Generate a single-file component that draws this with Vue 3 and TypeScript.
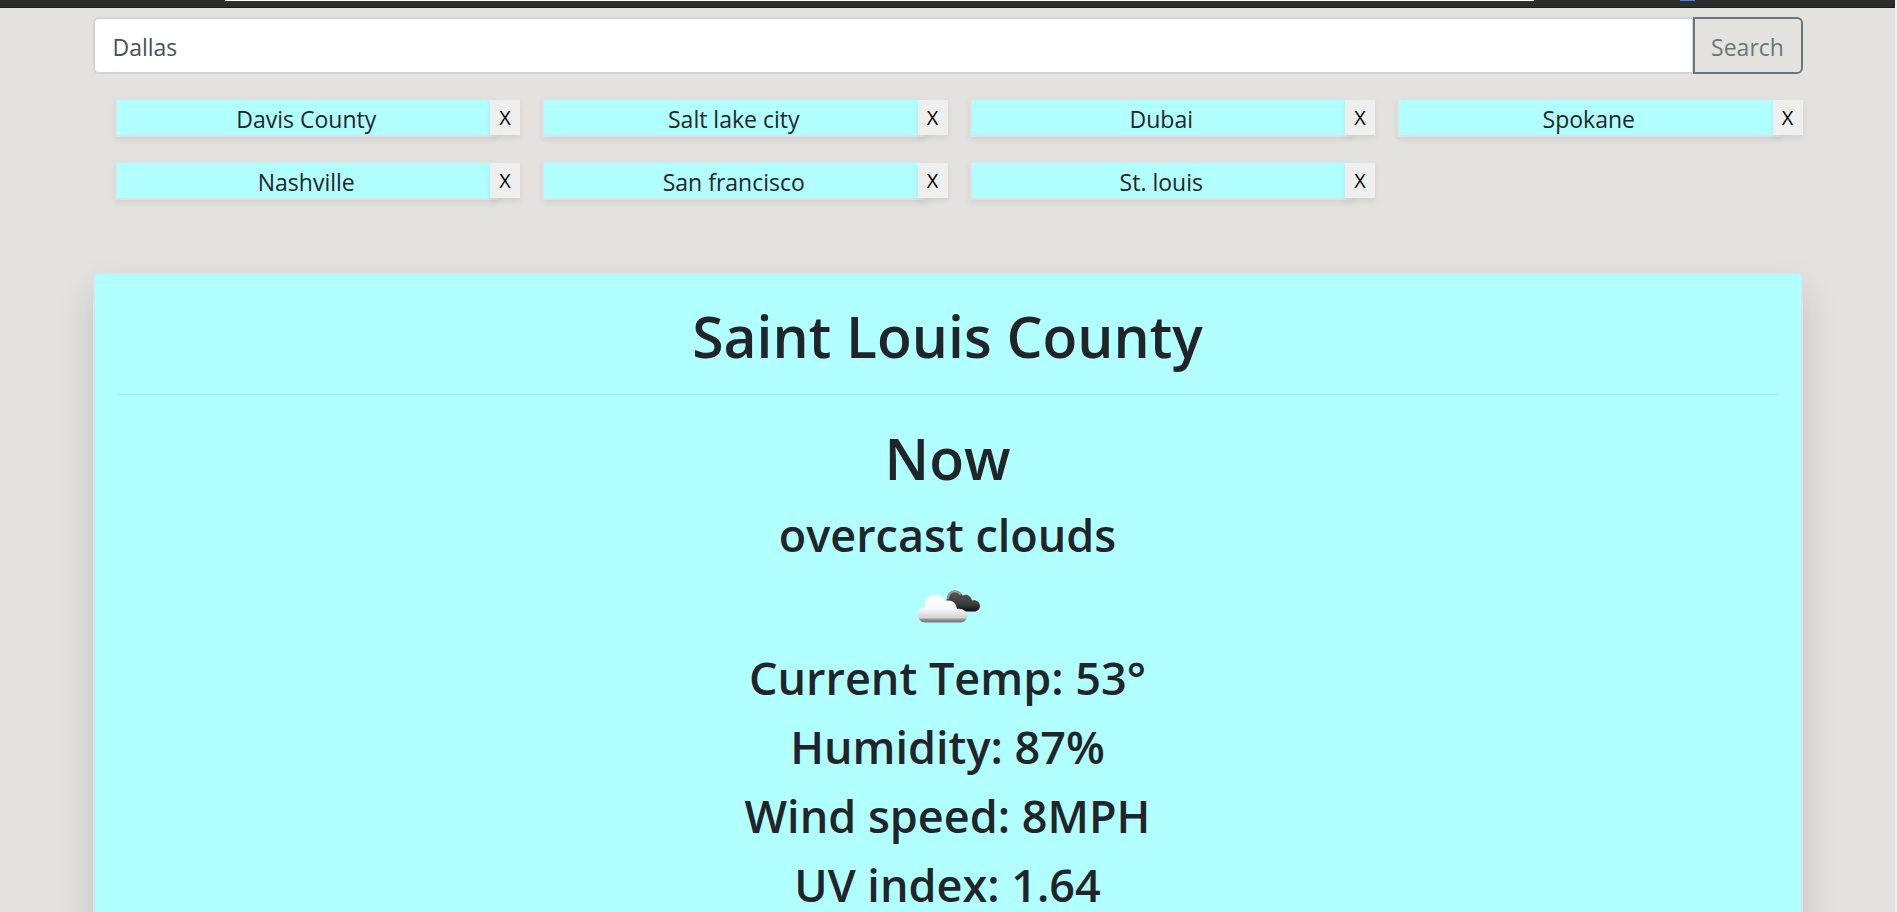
<script setup lang="ts">
import { ref } from 'vue'

const query = ref('Dallas')
const cities = ref<string[]>([
  'Davis County',
  'Salt lake city',
  'Dubai',
  'Spokane',
  'Nashville',
  'San francisco',
  'St. louis',
])
const current = ref('Saint Louis County')
const readings: string[] = [
  'Current Temp: 53°',
  'Humidity: 87%',
  'Wind speed: 8MPH',
  'UV index: 1.64',
]

function addCity(): void {
  const name = query.value.trim()
  if (name && !cities.value.includes(name)) cities.value.push(name)
}

function removeCity(index: number): void {
  cities.value.splice(index, 1)
}
</script>

<template>
  <div class="page">
    <div class="topbar">
      <span class="address"></span>
      <span class="marker"></span>
    </div>
    <main class="container">
      <form class="search" @submit.prevent="addCity">
        <input v-model="query" class="search-input" type="text" aria-label="City" />
        <button class="search-button" type="submit">Search</button>
      </form>

      <ul class="cities">
        <li v-for="(city, i) in cities" :key="city" class="city">
          <button class="city-name" type="button" @click="current = city">{{ city }}</button>
          <button class="city-remove" type="button" :aria-label="`X ${city}`" @click="removeCity(i)">X</button>
        </li>
      </ul>

      <section class="card">
        <h1 class="title">{{ current }}</h1>
        <hr class="rule" />
        <h1 class="title">Now</h1>
        <h2 class="line">overcast clouds</h2>
        <svg class="icon" viewBox="0 0 75 75" aria-hidden="true">
          <defs>
            <linearGradient id="light" x1="0" y1="0" x2="0" y2="1">
              <stop offset="0" stop-color="#ffffff" />
              <stop offset="0.5" stop-color="#f7f7f7" />
              <stop offset="0.82" stop-color="#d4d4d4" />
              <stop offset="0.9" stop-color="#8c8c8c" />
              <stop offset="1" stop-color="#777777" />
            </linearGradient>
            <linearGradient id="dark" x1="0" y1="0" x2="0" y2="1">
              <stop offset="0" stop-color="#5a5a5a" />
              <stop offset="0.65" stop-color="#3c3c3c" />
              <stop offset="1" stop-color="#111111" />
            </linearGradient>
          </defs>
          <path
            d="M41 42.500C37 40 35.500 35 37 29C37.500 24 41 21.500 45 21.500C48.500 21.500 51 23.500 52.500 26.500C56 24.500 61 26.500 62 31.500C66.500 30.500 70 33 70 37C70 40.500 67 42.500 64 42.500Z"
            fill="url(#dark)"
          />
          <path d="M38 30C38.500 25 41 22.500 44.500 22.500C47 22.500 49 23.500 50.500 25.500" fill="none" stroke="#a3a3a3" stroke-width="1.500" />
          <path
            d="M15 53.500C11 53.500 8 50 8 46C8 41.500 11 38.500 15.500 38C14 31 18 26 25.500 26C30 26 33 28 34.500 32C40.500 30 46.500 33 47 40C52.500 39 57 42 57 47C57 51 54 53.500 50.500 53.500Z"
            fill="url(#light)"
          />
        </svg>
        <h2 v-for="reading in readings" :key="reading" class="line">{{ reading }}</h2>
      </section>
    </main>
  </div>
</template>

<style>
html {
  overflow: hidden;
}
body {
  margin: 0;
  background: #e3e2de;
}
</style>

<style scoped>
* {
  box-sizing: border-box;
}
.page {
  height: 100vh;
  overflow: hidden;
  border-right: 2px solid #f0f0f0;
  background: #e3e2de;
  color: #212529;
  font-family: "Segoe UI", "Open Sans", "Noto Sans", sans-serif;
  font-size: 23px;
  line-height: 36px;
}
.topbar {
  display: flex;
  height: 8px;
  margin-right: -2px;
  background: #2d2d2d;
  border-bottom: 1px solid #1c1c1c;
}
.address {
  width: 69%;
  height: 1px;
  margin-left: 225px;
  background: #ffffff;
}
.marker {
  width: 15px;
  height: 1px;
  margin-left: auto;
  margin-right: 202px;
  background: #3b82f6;
}
.container {
  max-width: 1710px;
  margin: 0 auto;
  padding-top: 9px;
}
.search {
  display: flex;
}
.search-input,
.search-button {
  height: 57px;
  padding: 2px 18px 0;
  font: inherit;
}
.search-input {
  flex: 1;
  min-width: 0;
  border: 2px solid #ced4da;
  border-right-width: 1px;
  border-radius: 6px 0 0 6px;
  background: #ffffff;
  color: #495057;
  outline: none;
}
.search-button {
  width: 110px;
  padding: 2px 0 0;
  border: 2px solid #6c757d;
  border-radius: 0 6px 6px 0;
  background: transparent;
  color: #6c757d;
}
.cities {
  display: grid;
  grid-template-columns: repeat(4, 1fr);
  row-gap: 24px;
  margin: 24px 0 0;
  padding: 0;
  list-style: none;
}
.city {
  display: flex;
  align-items: center;
  padding-left: 22px;
}
.city-name {
  flex: 1;
  min-width: 0;
  height: 39px;
  padding: 3px 0 0;
  border: 2px solid #dee2e6;
  background: #b2ffff;
  color: inherit;
  font: inherit;
  line-height: 32px;
  box-shadow: 0 3px 6px rgba(0, 0, 0, 0.08);
}
.city-remove {
  width: 30px;
  height: 35px;
  margin-left: -8px;
  padding: 0;
  border: 0;
  background: #efefef;
  color: #000000;
  font: inherit;
  font-size: 20px;
  line-height: 35px;
  box-shadow: 0 3px 6px rgba(0, 0, 0, 0.08);
}
.card {
  margin-top: 72px;
  padding: 26px 22px;
  border: 2px solid #dee2e6;
  border-radius: 6px;
  background: #b2ffff;
  text-align: center;
  box-shadow: 0 16px 36px rgba(0, 0, 0, 0.14);
}
.title,
.line {
  margin: 0 0 12px;
  font-weight: 600;
}
.title {
  font-size: 57px;
  line-height: 72px;
}
.line {
  font-size: 45px;
  line-height: 57px;
}
.rule {
  margin: 22px 0 27px;
  border: 0;
  border-top: 1px solid #a0e6e6;
}
.icon {
  display: block;
  width: 75px;
  height: 75px;
  margin: -6px auto 5px;
}
</style>
